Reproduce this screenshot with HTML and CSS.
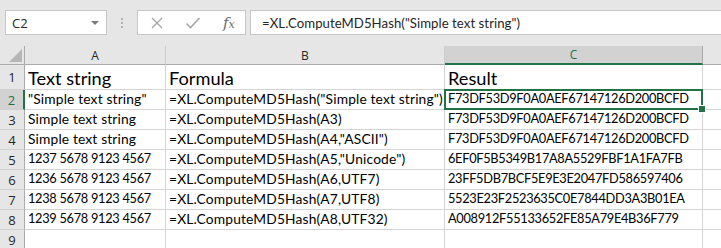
FILE: index.html
```html
<!DOCTYPE html>
<html>
<head>
<meta charset="utf-8">
<link rel="stylesheet" href="styles.css">
</head>
<body>
<div class="app">
  <div class="fbar">
    <div class="namebox"><span class="nb-text">C2</span><span class="nb-arrow"></span></div>
    <div class="grip"><span></span><span></span><span></span></div>
    <div class="fx-icons">
      <svg class="ico" width="14" height="14" viewBox="0 0 14 14"><path d="M2 2 L12 12 M12 2 L2 12" stroke="#a6a6a6" stroke-width="1.3" fill="none"/></svg>
      <svg class="ico" width="16" height="14" viewBox="0 0 16 14"><path d="M1.5 7.5 L5.5 11.5 L14.5 2" stroke="#a6a6a6" stroke-width="1.6" fill="none"/></svg>
      <span class="fx">f<span class="fx-x">x</span></span>
    </div>
    <div class="finput">=XL.ComputeMD5Hash("Simple text string")</div>
  </div>
  <div class="sheet">
    <div class="corner"><span class="tri"></span></div>
    <div class="ch">A</div>
    <div class="ch">B</div>
    <div class="ch ch-sel">C</div>
    <div class="ch ch-rest"></div>

    <div class="rh">1</div>
    <div class="c big">Text string</div>
    <div class="c big">Formula</div>
    <div class="c big">Result</div>
    <div class="c rest"></div>

    <div class="rh rh-sel">2</div>
    <div class="c">"Simple text string"</div>
    <div class="c">=XL.ComputeMD5Hash("Simple text string")</div>
    <div class="c hash sel">F73DF53D9F0A0AEF67147126D200BCFD</div>
    <div class="c rest"></div>

    <div class="rh">3</div>
    <div class="c">Simple text string</div>
    <div class="c">=XL.ComputeMD5Hash(A3)</div>
    <div class="c hash">F73DF53D9F0A0AEF67147126D200BCFD</div>
    <div class="c rest"></div>

    <div class="rh">4</div>
    <div class="c">Simple text string</div>
    <div class="c">=XL.ComputeMD5Hash(A4,"ASCII")</div>
    <div class="c hash">F73DF53D9F0A0AEF67147126D200BCFD</div>
    <div class="c rest"></div>

    <div class="rh">5</div>
    <div class="c num">1237 5678 9123 4567</div>
    <div class="c">=XL.ComputeMD5Hash(A5,"Unicode")</div>
    <div class="c hash">6EF0F5B5349B17A8A5529FBF1A1FA7FB</div>
    <div class="c rest"></div>

    <div class="rh">6</div>
    <div class="c num">1236 5678 9123 4567</div>
    <div class="c">=XL.ComputeMD5Hash(A6,UTF7)</div>
    <div class="c hash">23FF5DB7BCF5E9E3E2047FD586597406</div>
    <div class="c rest"></div>

    <div class="rh">7</div>
    <div class="c num">1238 5678 9123 4567</div>
    <div class="c">=XL.ComputeMD5Hash(A7,UTF8)</div>
    <div class="c hash">5523E23F2523635C0E7844DD3A3B01EA</div>
    <div class="c rest"></div>

    <div class="rh">8</div>
    <div class="c num">1239 5678 9123 4567</div>
    <div class="c">=XL.ComputeMD5Hash(A8,UTF32)</div>
    <div class="c hash">A008912F55133652FE85A79E4B36F779</div>
    <div class="c rest"></div>

    <div class="rh">9</div>
    <div class="c"></div>
    <div class="c"></div>
    <div class="c"></div>
    <div class="c rest"></div>
  </div>
</div>
</body>
</html>
```
FILE: styles.css
```css
* { box-sizing: border-box; }
html, body { margin: 0; padding: 0; }
body {
  background: #e6e6e6;
  width: 721px;
  height: 248px;
  overflow: hidden;
  font-family: Lato, "Liberation Sans", sans-serif;
}
.app { width: 721px; }

.fbar {
  display: flex;
  align-items: stretch;
  height: 46px;
  padding: 10px 0 11px 5px;
}
.namebox {
  width: 102px;
  background: #fff;
  border: 1px solid #c6c6c6;
  display: flex;
  align-items: center;
  justify-content: space-between;
  padding: 0 5px 0 6px;
}
.nb-text {
  font-family: "Open Sans", "Noto Sans", sans-serif;
  font-size: 13px;
  color: #262626;
}
.nb-arrow {
  width: 0; height: 0;
  border-left: 4px solid transparent;
  border-right: 4px solid transparent;
  border-top: 4px solid #7a7a7a;
  margin-right: 2px;
}
.grip {
  width: 30px;
  display: flex;
  flex-direction: column;
  align-items: center;
  justify-content: center;
  gap: 2px;
}
.grip span {
  width: 2px; height: 2px;
  background: #b3b3b3;
}
.fx-icons {
  width: 109px;
  background: #fff;
  border: 1px solid #c6c6c6;
  display: flex;
  align-items: center;
  padding-left: 12px;
  gap: 21px;
}
.fx {
  font-family: "DejaVu Serif", "Liberation Serif", serif;
  font-style: italic;
  font-size: 15px;
  color: #6b6b6b;
  margin-left: 1px;
}
.fx-x { font-size: 11px; }
.finput {
  flex: 1;
  margin-left: 4px;
  margin-right: -2px;
  background: #fff;
  border: 1px solid #c6c6c6;
  display: flex;
  align-items: center;
  padding-left: 11px;
  font-size: 13.2px;
  letter-spacing: 0.05px;
  color: #262626;
}

.sheet {
  display: grid;
  grid-template-columns: 25px 141px 279px 258px 18px;
  grid-template-rows: 19px 25px repeat(7, 20px) 20px;
  background: #fff;
}
.corner {
  background: #e6e6e6;
  border-right: 1px solid #ababab;
  border-bottom: 1px solid #ababab;
  position: relative;
}
.tri {
  position: absolute;
  right: 2px;
  bottom: 2px;
  width: 0; height: 0;
  border-left: 13px solid transparent;
  border-bottom: 13px solid #b7b7b7;
}
.ch {
  background: #e6e6e6;
  border-right: 1px solid #cdcdcd;
  border-bottom: 1px solid #ababab;
  display: flex;
  align-items: center;
  justify-content: center;
  font-family: "Open Sans", "Noto Sans", sans-serif;
  font-size: 12px;
  color: #262626;
}
.ch-sel {
  background: #d2d2d2;
  color: #217346;
  border-bottom: 2px solid #217346;
  border-right-color: #ababab;
}
.ch-rest { border-right: none; }
.rh {
  background: #e6e6e6;
  border-right: 1px solid #ababab;
  border-bottom: 1px solid #d0d0d0;
  display: flex;
  align-items: center;
  justify-content: center;
  font-family: "Open Sans", "Noto Sans", sans-serif;
  font-size: 13px;
  color: #262626;
}
.rh-sel {
  background: #d2d2d2;
  color: #217346;
  border-right: 2px solid #217346;
}
.c {
  border-right: 1px solid #d4d4d4;
  border-bottom: 1px solid #d4d4d4;
  display: flex;
  align-items: flex-end;
  padding: 0 0 2px 3px;
  font-size: 13.8px;
  letter-spacing: 0.15px;
  color: #000;
  white-space: nowrap;
  overflow: hidden;
}
.c.num, .c.hash {
  font-size: 12.8px;
  letter-spacing: -0.3px;
  padding-bottom: 3px;
}
.c.big {
  font-size: 18.2px;
  letter-spacing: 0;
  padding-bottom: 0;
  padding-left: 3px;
}
.c.rest { border-right: none; }
.sel {
  position: relative;
  overflow: visible;
}
.sel::before {
  content: "";
  position: absolute;
  left: -1px;
  top: -1px;
  right: -1px;
  bottom: -1px;
  border: 2px solid #217346;
}
.sel::after {
  content: "";
  position: absolute;
  right: -4px;
  bottom: -4px;
  width: 6px;
  height: 6px;
  background: #217346;
  border: 1px solid #fff;
}
```
